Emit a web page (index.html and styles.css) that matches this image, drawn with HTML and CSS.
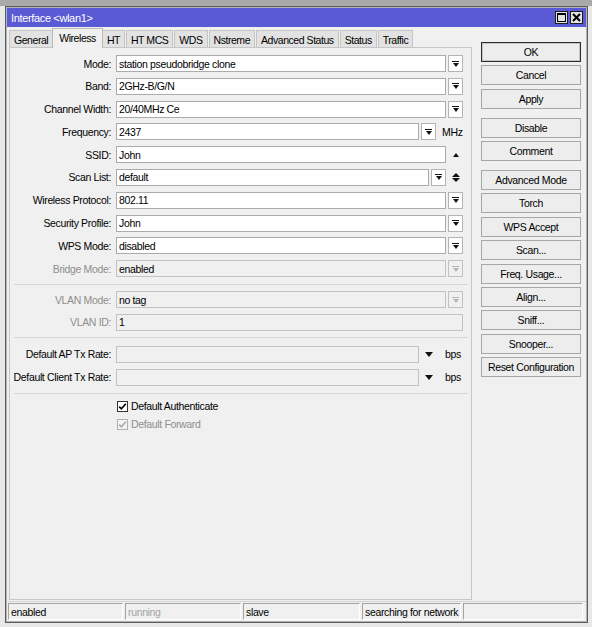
FILE: index.html
```html
<!DOCTYPE html>
<html lang="en">
<head>
    <meta charset="UTF-8">
    <title>Interface &lt;wlan1&gt;</title>
    <link rel="stylesheet" href="styles.css">
</head>
<body>
    <div class="window">
        <div class="titlebar">
            <span class="title">Interface &lt;wlan1&gt;</span>
            <span class="tb-btns">
                <span class="tb-btn">
                    <svg width="9" height="9" viewBox="0 0 9 9"><rect x="0.5" y="0.5" width="8" height="8" fill="none" stroke="#000"/><rect x="0" y="0" width="9" height="2" fill="#000"/></svg>
                </span>
                <span class="tb-btn">
                    <svg width="9" height="9" viewBox="0 0 9 9"><path d="M1 1 L8 8 M8 1 L1 8" stroke="#000" stroke-width="2"/></svg>
                </span>
            </span>
        </div>
        <div class="client">
            <div class="main">
                <div class="left">
                    <ul class="tabs">
                        <li>General</li>
                        <li class="active">Wireless</li>
                        <li>HT</li>
                        <li>HT MCS</li>
                        <li>WDS</li>
                        <li>Nstreme</li>
                        <li>Advanced Status</li>
                        <li>Status</li>
                        <li>Traffic</li>
                    </ul>
                    <div class="panel">
                        <div class="section s1">
                            <div class="row">
                                <label>Mode:</label>
                                <div class="ctl"><span class="input">station pseudobridge clone</span><span class="dd"></span></div>
                            </div>
                            <div class="row">
                                <label>Band:</label>
                                <div class="ctl"><span class="input">2GHz-B/G/N</span><span class="dd"></span></div>
                            </div>
                            <div class="row">
                                <label>Channel Width:</label>
                                <div class="ctl"><span class="input">20/40MHz Ce</span><span class="dd"></span></div>
                            </div>
                            <div class="row">
                                <label>Frequency:</label>
                                <div class="ctl"><span class="input">2437</span><span class="dd"></span><span class="unit">MHz</span></div>
                            </div>
                            <div class="row">
                                <label>SSID:</label>
                                <div class="ctl"><span class="input">John</span><span class="arrow up"></span></div>
                            </div>
                            <div class="row">
                                <label>Scan List:</label>
                                <div class="ctl"><span class="input">default</span><span class="dd"></span><span class="arrow updown"></span></div>
                            </div>
                            <div class="row">
                                <label>Wireless Protocol:</label>
                                <div class="ctl"><span class="input">802.11</span><span class="dd"></span></div>
                            </div>
                            <div class="row">
                                <label>Security Profile:</label>
                                <div class="ctl"><span class="input">John</span><span class="dd"></span></div>
                            </div>
                            <div class="row">
                                <label>WPS Mode:</label>
                                <div class="ctl"><span class="input">disabled</span><span class="dd"></span></div>
                            </div>
                            <div class="row off">
                                <label>Bridge Mode:</label>
                                <div class="ctl"><span class="input">enabled</span><span class="dd"></span></div>
                            </div>
                        </div>
                        <hr class="sep">
                        <div class="section s2">
                            <div class="row off">
                                <label>VLAN Mode:</label>
                                <div class="ctl"><span class="input">no tag</span><span class="dd"></span></div>
                            </div>
                            <div class="row off">
                                <label>VLAN ID:</label>
                                <div class="ctl"><span class="input">1</span></div>
                            </div>
                        </div>
                        <hr class="sep">
                        <div class="section s3">
                            <div class="row">
                                <label>Default AP Tx Rate:</label>
                                <div class="ctl"><span class="input blank"></span><span class="arrow down"></span><span class="unit bps">bps</span></div>
                            </div>
                            <div class="row">
                                <label>Default Client Tx Rate:</label>
                                <div class="ctl"><span class="input blank"></span><span class="arrow down"></span><span class="unit bps">bps</span></div>
                            </div>
                        </div>
                        <hr class="sep">
                        <div class="section s4">
                            <div class="check">
                                <span class="box"><svg width="9" height="9" viewBox="0 0 9 9"><path d="M1.2 4.6 L3.4 6.8 L7.8 1.8" fill="none" stroke="#000" stroke-width="1.7"/></svg></span>
                                <span>Default Authenticate</span>
                            </div>
                            <div class="check off">
                                <span class="box"><svg width="9" height="9" viewBox="0 0 9 9"><path d="M1.2 4.6 L3.4 6.8 L7.8 1.8" fill="none" stroke="#a8a8a8" stroke-width="1.5"/></svg></span>
                                <span>Default Forward</span>
                            </div>
                        </div>
                    </div>
                </div>
                <div class="side">
                    <button class="btn default">OK</button>
                    <button class="btn">Cancel</button>
                    <button class="btn">Apply</button>
                    <button class="btn group">Disable</button>
                    <button class="btn">Comment</button>
                    <button class="btn group2">Advanced Mode</button>
                    <button class="btn">Torch</button>
                    <button class="btn">WPS Accept</button>
                    <button class="btn">Scan...</button>
                    <button class="btn">Freq. Usage...</button>
                    <button class="btn">Align...</button>
                    <button class="btn">Sniff...</button>
                    <button class="btn">Snooper...</button>
                    <button class="btn">Reset Configuration</button>
                </div>
            </div>
            <div class="status">
                <span class="cell">enabled</span>
                <span class="cell dim">running</span>
                <span class="cell">slave</span>
                <span class="cell">searching for network</span>
                <span class="cell"></span>
            </div>
        </div>
    </div>
</body>
</html>
```

FILE: styles.css
```css
* {
    margin: 0;
    padding: 0;
    box-sizing: border-box;
}
body {
    background: linear-gradient(#a9a9a9 0, #a9a9a9 6px, #e8e8e8 6px);
    font-family: "Liberation Sans", Arial, sans-serif;
    font-size: 10.5px;
    letter-spacing: -0.35px;
    color: #000;
    height: 627px;
    overflow: hidden;
}
.window {
    width: 583px;
    height: 617px;
    margin: 6px 0 0 5px;
    border: 1px solid #5c5c5c;
    padding: 1px;
    background: #b4b4b4;
    display: flex;
    flex-direction: column;
}
.titlebar {
    height: 19px;
    background: #5a5ad4;
    color: #fff;
    display: flex;
    align-items: center;
    justify-content: space-between;
    padding: 0 3px 0 4px;
    font-size: 11px;
}
.tb-btns {
    display: flex;
    gap: 2px;
}
.tb-btn {
    width: 13px;
    height: 13px;
    border: 1px solid #1e1e1e;
    background: #e2e2e2;
    display: flex;
    align-items: center;
    justify-content: center;
}
.client {
    flex: 1;
    background: #f0f0f0;
    display: flex;
    flex-direction: column;
    padding: 0 0 1px 1px;
}
.main {
    flex: 1;
    display: flex;
}
.left {
    width: 463px;
    margin-left: 1px;
    display: flex;
    flex-direction: column;
}

/* tabs */
.tabs {
    list-style: none;
    display: flex;
    align-items: flex-end;
    height: 20px;
    letter-spacing: -0.45px;
}
.tabs li {
    height: 17px;
    padding: 2px 4px 0 4px;
    margin-right: 1px;
    border: 1px solid #c4c4c4;
    border-bottom: none;
    background: #e2e2e2;
    display: flex;
    align-items: center;
}
.tabs li.active {
    height: 20px;
    margin: 0 -1px -1px -2px;
    padding: 0 6px 2px;
    background: #f0f0f0;
    border-color: #b9b9b9;
    position: relative;
    z-index: 1;
}
.panel {
    flex: 1;
    border: 1px solid #c6c6c6;
    background: #f0f0f0;
}

/* form */
.section {
    display: flex;
    flex-direction: column;
    gap: 5.8px;
}
.s1 { padding: 7px 0 7px; }
.s2 { padding: 6px 0 6px; }
.s3 { padding: 8px 0 7px; }
.s4 { padding: 6px 0 0; gap: 5px; }
.sep {
    border: 0;
    border-top: 1px solid #d6d6d6;
    margin: 0 3px 0 4px;
}
.row {
    display: grid;
    grid-template-columns: 101px 347px;
    column-gap: 5px;
    align-items: center;
    height: 17px;
}
.row label {
    text-align: right;
    white-space: nowrap;
}
.ctl {
    display: flex;
    align-items: center;
    gap: 2px;
    height: 17px;
}
.input {
    flex: 1;
    height: 17px;
    border: 1px solid #ababab;
    background: #fff;
    padding: 0 2px;
    display: flex;
    align-items: center;
    white-space: nowrap;
    overflow: hidden;
}
.input.blank {
    background: #f0f0f0;
    border-color: #c2c2c2;
}
.dd {
    width: 15px;
    height: 17px;
    border: 1px solid #b4b4b4;
    background: #fff;
    display: flex;
    flex-direction: column;
    align-items: center;
    justify-content: center;
}
.dd::before {
    content: "";
    width: 7px;
    height: 1px;
    background: #111;
    margin-bottom: 1px;
}
.dd::after {
    content: "";
    border-top: 4px solid #111;
    border-left: 3.5px solid transparent;
    border-right: 3.5px solid transparent;
}
.unit {
    width: 25px;
    padding-left: 4px;
}
.unit.bps {
    padding-left: 7px;
}
.arrow {
    width: 15px;
    display: flex;
    flex-direction: column;
    align-items: center;
    justify-content: center;
    gap: 1px;
}
.arrow.up::after {
    content: "";
    border-bottom: 4px solid #111;
    border-left: 3.5px solid transparent;
    border-right: 3.5px solid transparent;
}
.arrow.updown::before {
    content: "";
    border-bottom: 4px solid #111;
    border-left: 4.5px solid transparent;
    border-right: 4.5px solid transparent;
}
.arrow.updown::after {
    content: "";
    border-top: 4px solid #111;
    border-left: 4.5px solid transparent;
    border-right: 4.5px solid transparent;
}
.arrow.down::after {
    content: "";
    border-top: 5px solid #111;
    border-left: 4.5px solid transparent;
    border-right: 4.5px solid transparent;
}
.row.off label {
    color: #8e8e8e;
}
.row.off .input {
    background: #f0f0f0;
    border-color: #c2c2c2;
}
.row.off .dd {
    background: #f0f0f0;
    border-color: #c2c2c2;
}
.row.off .dd::before {
    background: #b4b4b4;
}
.row.off .dd::after {
    border-top-color: #b4b4b4;
}
.check {
    display: flex;
    align-items: center;
    gap: 3px;
    height: 13px;
    margin-left: 107px;
}
.check .box {
    width: 11px;
    height: 11px;
    border: 1px solid #333;
    background: #fff;
    display: flex;
    align-items: center;
    justify-content: center;
}
.check.off {
    color: #8e8e8e;
}
.check.off .box {
    border-color: #b0b0b0;
    background: #f4f4f4;
}

/* right buttons */
.side {
    width: 100px;
    margin-left: 9px;
    padding-top: 15px;
    display: flex;
    flex-direction: column;
    gap: 3.4px;
}
.btn {
    height: 20px;
    border: 1px solid #a6a6a6;
    background: #ededed;
    font: inherit;
    letter-spacing: inherit;
    color: #000;
    text-align: center;
}
.btn.default {
    border-color: #2e2e2e;
    box-shadow: inset 0 0 0 1px #c4c4c4;
}
.btn.group {
    margin-top: 5.8px;
}
.btn.group2 {
    margin-top: 5.2px;
}

/* status bar */
.status {
    display: grid;
    grid-template-columns: 115px 116px 117px 99px 120px;
    column-gap: 2px;
    height: 19px;
    margin-top: 1px;
    border-top: 1px solid #d2d2d2;
    padding-top: 1px;
}
.cell {
    border-top: 1px solid #a4a4a4;
    border-left: 1px solid #a4a4a4;
    border-right: 1px solid #fff;
    border-bottom: 1px solid #fff;
    padding-left: 2px;
    display: flex;
    align-items: center;
    white-space: nowrap;
}
.cell.dim {
    color: #a4a4a4;
}
```
